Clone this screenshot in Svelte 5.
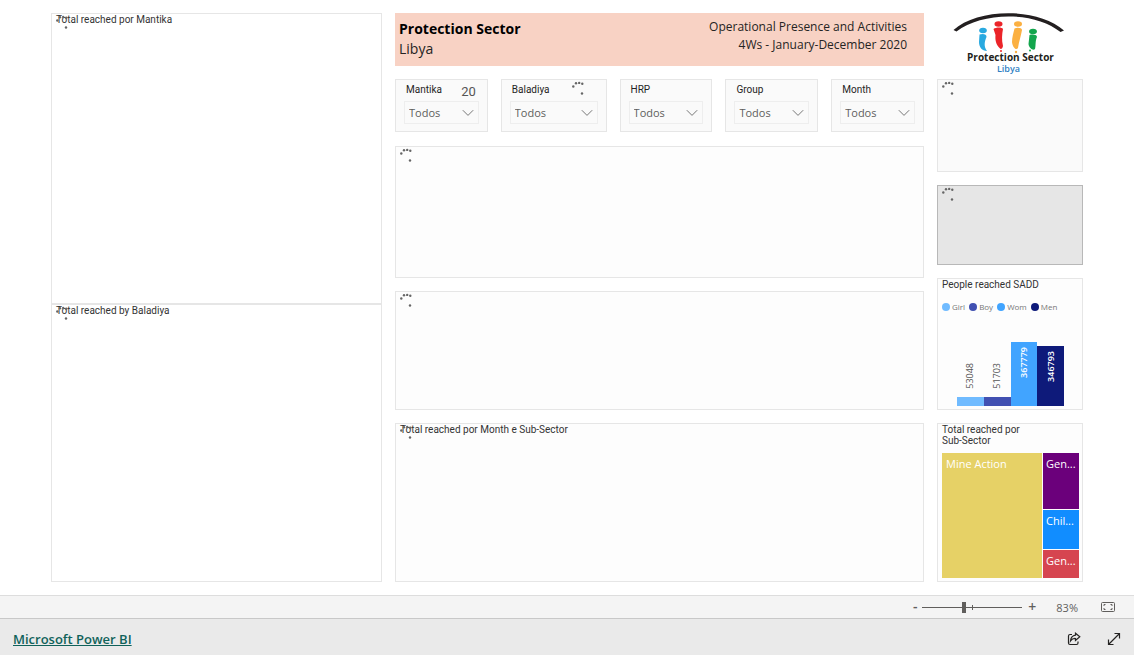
<script>
	const slicers = [
		{ id: 'mantika', label: 'Mantika', count: 20 },
		{ id: 'baladiya', label: 'Baladiya', loading: true },
		{ id: 'hrp', label: 'HRP' },
		{ id: 'group', label: 'Group' },
		{ id: 'month', label: 'Month' }
	];

	const people = [
		{ name: 'Girl', value: 53048, color: '#70bbff' },
		{ name: 'Boy', value: 51703, color: '#4150b1' },
		{ name: 'Wom', value: 367779, color: '#41a4ff' },
		{ name: 'Men', value: 346793, color: '#0e1a7a' }
	];

	const maxPeople = Math.max(...people.map((p) => p.value));

	const small = [
		{ name: 'Gen...', share: 56, color: '#6b007b' },
		{ name: 'Chil...', share: 38, color: '#118dff' },
		{ name: 'Gen...', share: 28, color: '#d64550' }
	];

	let zoom = 41;
</script>

{#snippet spinner()}
	<svg class="spinner" viewBox="0 0 14 14" width="14" height="14" aria-hidden="true">
		<circle cx="1.3" cy="5.5" r="1.2" />
		<circle cx="4" cy="2.3" r="1.2" />
		<circle cx="7.2" cy="1.9" r="1.2" />
		<circle cx="10.3" cy="2.8" r="1.2" />
		<circle cx="10" cy="12.5" r="1.2" />
	</svg>
{/snippet}

<div class="report">
	<main class="board">
		<div class="col">
			<section class="panel map-top">
				<h2>Total reached por Mantika</h2>
				{@render spinner()}
			</section>
			<section class="panel map-bottom">
				<h2>Total reached by Baladiya</h2>
				{@render spinner()}
			</section>
		</div>

		<div class="col spaced">
			<header class="banner">
				<h1>Protection Sector<span>Libya</span></h1>
				<p>Operational Presence and Activities<br />4Ws - January-December 2020</p>
			</header>

			<div class="slicers">
				{#each slicers as s}
					<div class="panel slicer" class:wide={s.loading}>
						<div class="slicer-head">
							<label for={s.id}>{s.label}</label>
							{#if s.count}<output>{s.count}</output>{/if}
						</div>
						<div class="drop">
							<select id={s.id}>
								<option>Todos</option>
							</select>
							<svg viewBox="0 0 12 8" width="12" height="8" aria-hidden="true">
								<path d="M0.8 1.2 6 6.4 11.2 1.2" />
							</svg>
						</div>
						{#if s.loading}{@render spinner()}{/if}
					</div>
				{/each}
			</div>

			<section class="panel h-132">{@render spinner()}</section>
			<section class="panel h-119">{@render spinner()}</section>
			<section class="panel h-159">
				<h2>Total reached por Month e Sub-Sector</h2>
				{@render spinner()}
			</section>
		</div>

		<div class="col spaced">
			<svg class="logo" viewBox="0 0 146 66" role="img" aria-label="Protection Sector Libya">
				<path d="M16.5 17C40-5 101-6 127 17.5L123.5 19C98-2 45-1.5 19.5 18.5Z" fill="#231f20" />
				<g fill="#29a9e0">
					<ellipse cx="46" cy="17.5" rx="3.8" ry="2.7" />
					<path d="M42.500 21.500C45 20.500 50 20.500 49.500 24C47.500 29 46.500 33 50 38C45 38 42 34 42 29Z" />
				</g>
				<g fill="#eb2429">
					<ellipse cx="61.500" cy="11" rx="4" ry="2.700" />
					<path d="M56.500 16C59 14 65 14 66 16C65 21 64.500 27 66 33C65.500 35.500 64 36.500 63 35.500C59 32 58 27 58.500 22Z" />
					<circle cx="64" cy="38" r="1" />
				</g>
				<g fill="#fbb042">
					<ellipse cx="81" cy="11" rx="4" ry="2.700" />
					<path d="M77.500 15.500C80 14 85 14.500 85 17C84 23 82 28 81 35C79 38 75.500 34 75 29C75 24 76.500 20 77.500 15.500Z" />
					<circle cx="79" cy="39" r="1.200" />
				</g>
				<g fill="#13a64d">
					<ellipse cx="96" cy="18.500" rx="3.900" ry="2.700" />
					<path d="M92.500 22C95 21 100 21.500 100 24C98 28 99 33 98 36C96 38 92 35 91.500 31Z" />
					<circle cx="93" cy="37.500" r="1" />
				</g>
				<text x="73.500" y="48" class="logo-name">Protection Sector</text>
				<text x="71.500" y="59" class="logo-place">Libya</text>
			</svg>
			<section class="panel card">{@render spinner()}</section>
			<section class="panel card-dark">{@render spinner()}</section>

			<section class="panel h-132 sadd">
				<h2>People reached SADD</h2>
				<ul class="legend">
					{#each people as p}
						<li><i style="background: {p.color}"></i>{p.name}</li>
					{/each}
				</ul>
				<div class="bars">
					{#each people as p}
						<div class="slot">
							{#if p.value < 100000}<span>{p.value}</span>{/if}
							<div class="bar" style="background: {p.color}; height: {Math.round((p.value / maxPeople) * 64)}px">
								{#if p.value >= 100000}<span>{p.value}</span>{/if}
							</div>
						</div>
					{/each}
				</div>
			</section>

			<section class="panel h-159 tree">
				<h2>Total reached por<br />Sub-Sector</h2>
				<div class="treemap">
					<div class="leaf main">Mine Action</div>
					<div class="stack">
						{#each small as leaf}
							<div class="leaf" style="background: {leaf.color}; flex-grow: {leaf.share}">{leaf.name}</div>
						{/each}
					</div>
				</div>
			</section>
		</div>
	</main>

	<div class="zoombar">
		<button class="step minus" aria-label="Zoom out">-</button>
		<input type="range" min="0" max="100" bind:value={zoom} aria-label="Zoom" />
		<button class="step plus" aria-label="Zoom in">+</button>
		<span class="percent">83%</span>
		<button class="fit" aria-label="Fit to page">
			<svg viewBox="0 0 14 10" width="14" height="10">
				<rect x="0.5" y="0.5" width="13" height="9" rx="1" />
				<path d="M3 4V2.5H4.5M9.5 2.5H11V4M11 6V7.5H9.5M4.5 7.5H3V6" />
			</svg>
		</button>
	</div>

	<footer>
		<a href="https://powerbi.microsoft.com">Microsoft Power BI</a>
		<div class="actions">
			<button aria-label="Share">
				<svg viewBox="0 0 14 14" width="14" height="14">
					<path d="M5 2.5H3Q1.500 2.500 1.500 4V11Q1.500 12.500 3 12.500H9.500Q11 12.500 11 11V9.500" />
					<path d="M8.500 1.200 12.800 4.800 8.500 8.500V6.500Q5.500 6.200 3.500 9Q4 3.800 8.500 3.200Z" />
				</svg>
			</button>
			<button aria-label="Full screen">
				<svg viewBox="0 0 14 14" width="14" height="14">
					<path d="M1.5 12.5 12.5 1.5M7.5 1.5H12.5V6.5M1.5 7.5V12.5H6.5" />
				</svg>
			</button>
		</div>
	</footer>
</div>

<style>
	:global(body) {
		margin: 0;
		background: #fff;
	}

	.report {
		font-family: 'Open Sans', 'Noto Sans', sans-serif;
		color: #252423;
		min-height: 100vh;
		display: flex;
		flex-direction: column;
	}

	h1,
	h2,
	p,
	ul {
		margin: 0;
		padding: 0;
		font-weight: 400;
	}

	button {
		border: 0;
		padding: 0;
		background: none;
		font: inherit;
		color: inherit;
		display: flex;
	}

	.board {
		flex: 1;
		display: grid;
		grid-template-columns: minmax(0, 331fr) minmax(0, 529fr) minmax(0, 146fr);
		gap: 13px;
		padding: 13px 51px;
	}

	.col {
		display: flex;
		flex-direction: column;
	}

	.spaced {
		justify-content: space-between;
	}

	.panel {
		position: relative;
		box-sizing: border-box;
		border: 1px solid #e6e6e6;
		background: #fdfdfd;
	}

	.panel h2 {
		font: 10px/11px Roboto, sans-serif;
		padding: 0 4px 2px;
		color: #333;
	}

	.spinner {
		position: absolute;
		top: 1px;
		left: 4px;
		fill: #666;
	}

	.map-top,
	.map-bottom {
		background: #fff;
	}

	.map-top {
		flex: 291;
	}

	.map-bottom {
		flex: 278;
	}

	.h-132 {
		height: 132px;
	}

	.h-119 {
		height: 119px;
	}

	.h-159 {
		height: 159px;
	}

	.banner {
		box-sizing: border-box;
		height: 53px;
		padding: 5px 17px 0 4px;
		background: #f8d2c4;
		display: flex;
		justify-content: space-between;
	}

	.banner h1 {
		padding-top: 1px;
		font-size: 14px;
		line-height: 20px;
		font-weight: 700;
		color: #000;
	}

	.banner h1 span {
		display: block;
		font-weight: 400;
		color: #252423;
	}

	.banner p {
		font-size: 12px;
		line-height: 18px;
		text-align: right;
	}

	.slicers {
		display: flex;
		gap: 13px;
		height: 53px;
	}

	.slicer {
		flex: 75 1 0;
		min-width: 0;
		padding: 0 8px;
		background: #fafafa;
	}

	.slicer.wide {
		flex-grow: 88;
	}

	.slicer .spinner {
		left: 70px;
	}

	.slicer-head {
		display: flex;
		justify-content: space-between;
		height: 21px;
		padding: 0 3px 0 2px;
		font-family: Roboto, sans-serif;
	}

	.slicer-head label {
		font-size: 10px;
		line-height: 20px;
	}

	.slicer-head output {
		font-size: 13px;
		line-height: 24px;
		color: #555;
	}

	.drop {
		display: grid;
		align-items: center;
	}

	.drop select {
		grid-area: 1 / 1;
		appearance: none;
		width: 100%;
		height: 23px;
		padding: 0 4px;
		border: 1px solid #eee;
		border-radius: 0;
		background: transparent;
		font: 11px/20px 'Open Sans', 'Noto Sans', sans-serif;
		color: #605e5c;
	}

	.drop svg {
		grid-area: 1 / 1;
		justify-self: end;
		margin-right: 5px;
		fill: none;
		stroke: #777;
		pointer-events: none;
	}

	/* the wordmark runs below the banner line, into the first gap */
	.logo {
		width: 100%;
		height: 66px;
		margin-bottom: -13px;
	}

	.logo text {
		text-anchor: middle;
		font-family: 'Open Sans', sans-serif;
		font-weight: 700;
	}

	.logo-name {
		font-size: 10px;
		fill: #231f20;
	}

	.logo .logo-place {
		font-size: 9px;
		font-weight: 600;
		fill: #2f7fc3;
	}

	.card {
		height: 93px;
		background: #fafafa;
	}

	.card-dark {
		height: 80px;
		background: #e6e6e6;
		border-color: #b8b8b8;
	}

	.sadd,
	.tree {
		display: flex;
		flex-direction: column;
	}

	.legend {
		display: flex;
		gap: 4px;
		padding: 9px 4px 0;
		list-style: none;
		font-size: 8px;
		line-height: 12px;
		color: #777;
	}

	.legend li {
		display: flex;
		align-items: center;
		gap: 2px;
	}

	.legend i {
		width: 8px;
		height: 8px;
		border-radius: 50%;
	}

	.bars {
		flex: 1;
		display: flex;
		align-items: flex-end;
		padding: 0 18px 3px 19px;
	}

	.slot {
		flex: 1;
		display: flex;
		flex-direction: column;
		align-items: center;
		gap: 8px;
	}

	.bar {
		width: 100%;
		display: flex;
		justify-content: center;
		align-items: flex-start;
	}

	.slot span {
		writing-mode: vertical-rl;
		transform: rotate(180deg);
		font-size: 9px;
		line-height: 12px;
		color: #555;
	}

	.bar span {
		margin-top: 5px;
		font-weight: 600;
		color: #fff;
	}

	.tree h2 {
		padding-bottom: 7px;
	}

	.treemap {
		flex: 1;
		display: flex;
		gap: 1px;
		padding: 0 3px 3px 4px;
	}

	.leaf {
		flex: 1 1 0;
		padding: 0 3px;
		font-size: 11px;
		line-height: 22px;
		color: #fff;
		white-space: nowrap;
	}

	.main {
		flex-grow: 94;
		padding-left: 4px;
		background: #e6d166;
	}

	.stack {
		flex: 0 0 36px;
		display: flex;
		flex-direction: column;
		gap: 1px;
	}

	.zoombar {
		box-sizing: border-box;
		height: 23px;
		padding: 0 19px;
		border-top: 1px solid #ddd;
		background: #f4f4f4;
		display: flex;
		align-items: center;
		justify-content: flex-end;
		font-size: 12px;
		color: #605e5c;
	}

	.step {
		width: 10px;
		justify-content: center;
		font-size: 14px;
		line-height: 20px;
		font-weight: 600;
	}

	.step.minus {
		padding-bottom: 3px;
	}

	.step.plus {
		margin-left: 5px;
	}

	.zoombar input {
		appearance: none;
		width: 100px;
		height: 11px;
		margin: 0 0 0 2px;
		background:
			linear-gradient(#605e5c, #605e5c) 50px 50% / 1px 5px no-repeat,
			linear-gradient(#605e5c, #605e5c) 0 50% / 100% 1px no-repeat;
	}

	.zoombar input::-webkit-slider-thumb {
		appearance: none;
		width: 4px;
		height: 11px;
		background: #605e5c;
	}

	.percent {
		margin: 0 23px 0 19px;
		font-size: 11px;
	}

	.fit svg {
		fill: none;
		stroke: #605e5c;
	}

	footer {
		box-sizing: border-box;
		height: 37px;
		padding: 3px 13px 0;
		border-top: 1px solid #c8c8c8;
		background: #eaeaea;
		display: flex;
		align-items: center;
		justify-content: space-between;
	}

	footer a {
		font-size: 13px;
		line-height: 18px;
		font-weight: 600;
		color: #10625a;
	}

	.actions {
		display: flex;
		gap: 26px;
	}

	.actions svg {
		fill: none;
		stroke: #252423;
		stroke-width: 1.2;
	}
</style>
